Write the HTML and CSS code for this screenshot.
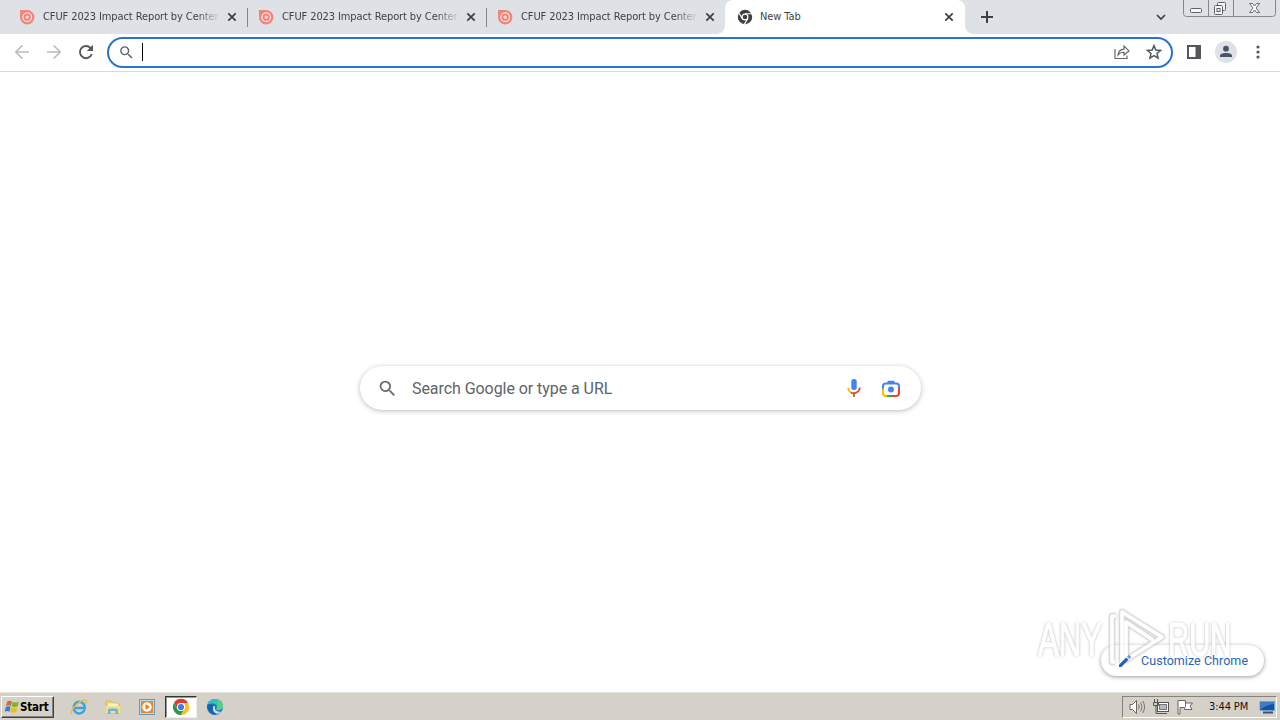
FILE: index.html
```html
<!DOCTYPE html>
<html lang="en">
<head>
<meta charset="utf-8">
<title>New Tab</title>
<link rel="stylesheet" href="styles.css">
</head>
<body>
<svg class="defs" width="0" height="0">
  <symbol id="issuu" viewBox="0 0 16 16"><path d="M1 1H8.300A7.200 7.200 0 1 1 1 8Z" fill="#f2857b"/><circle cx="8.200" cy="8.200" r="4.300" fill="none" stroke="#f9dfdd" stroke-width="1.300"/><circle cx="8.200" cy="8.200" r="1.600" fill="#f9dfdd"/></symbol>
  <symbol id="close" viewBox="0 0 10 10"><path d="M1.300 1.300 8.700 8.700M8.700 1.300 1.300 8.700" stroke="#3c4043" stroke-width="1.700"/></symbol>
  <symbol id="search" viewBox="0 0 24 24"><path d="M15.500 14h-.79l-.28-.27A6.471 6.471 0 0 0 16 9.500 6.500 6.500 0 1 0 9.500 16c1.610 0 3.090-.59 4.230-1.570l.27.28v.79l5 4.990L20.490 19l-4.990-5zm-6 0C7.010 14 5 11.990 5 9.500S7.010 5 9.500 5 14 7.010 14 9.500 11.990 14 9.500 14z"/></symbol>
</svg>
<div class="screen">
  <header class="tabstrip">
    <div class="tab"><svg class="favicon"><use href="#issuu"/></svg><span class="title fade">CFUF 2023 Impact Report by Center</span><svg class="x"><use href="#close"/></svg></div>
    <div class="tab"><svg class="favicon"><use href="#issuu"/></svg><span class="title fade">CFUF 2023 Impact Report by Center</span><svg class="x"><use href="#close"/></svg></div>
    <div class="tab last"><svg class="favicon"><use href="#issuu"/></svg><span class="title fade">CFUF 2023 Impact Report by Center</span><svg class="x"><use href="#close"/></svg></div>
    <div class="tab active">
      <svg class="favicon" viewBox="0 0 16 16"><circle cx="8" cy="8" r="7.200" fill="#3c4043"/><circle cx="8" cy="8" r="2.900" fill="none" stroke="#fff" stroke-width="1.200"/><path d="M8 4.800h7M5.200 9.600 1.800 3.800M10.800 9.600 7.300 15.400" stroke="#fff" stroke-width="1.100"/></svg>
      <span class="title">New Tab</span><svg class="x"><use href="#close"/></svg>
    </div>
    <svg class="plus" viewBox="0 0 12 12"><path d="M6 0V12M0 6H12" stroke="#3c4043" stroke-width="2"/></svg>
    <svg class="chevron" viewBox="0 0 10 7"><path d="M1 1 5 5 9 1" fill="none" stroke="#3c4043" stroke-width="1.700"/></svg>
    <svg class="caption" viewBox="0 0 93 17"><path d="M.5 0V13.500Q.5 16.500 3.500 16.500H89.500Q92.500 16.500 92.500 13.500V0M25.500 0V16M50.500 0V16" fill="none" stroke="#85898f"/><g fill="#f4f5f7" stroke="#5d6269"><rect x="7.500" y="8.500" width="11" height="4" rx="1"/><rect x="34.500" y="2.500" width="8" height="8" rx="1"/><rect x="31.500" y="5.500" width="8" height="9" rx="1"/><rect x="34" y="8.500" width="3" height="3"/><path d="M66.500 3.500H69.500L71.500 6 73.500 3.500H76.500L73.200 8 76.500 12.500H73.500L71.500 10 69.500 12.500H66.500L69.800 8Z" stroke-width=".9"/></g></svg>
  </header>
  <div class="toolbar">
    <svg class="nav" viewBox="0 0 16 16"><path d="M15 8H2M8.300 1.500 1.800 8 8.300 14.500" fill="none" stroke="#babcbe" stroke-width="1.700"/></svg>
    <svg class="nav" viewBox="0 0 16 16"><path d="M1 8H14M7.700 1.500 14.200 8 7.700 14.500" fill="none" stroke="#babcbe" stroke-width="1.700"/></svg>
    <svg class="nav" viewBox="0 0 16 16"><path d="M13.800 10A6.100 6.100 0 1 1 12.500 3.900L14 5.500" fill="none" stroke="#54585c" stroke-width="1.900"/><path d="M15 .8V7H8.800Z" fill="#54585c"/></svg>
    <div class="omnibox">
      <svg class="glass"><use href="#search"/></svg><i class="caret"></i>
      <svg class="share" viewBox="0 0 16 16"><path d="M1 5V14.500H13V11.500M4 11C4.500 7 6.500 5.300 10 5.100V2.200L15 6.900 10 11V8.300C7.200 8.200 5.500 9 4 11Z" fill="none" stroke="#5f6368" stroke-width="1.150"/></svg>
      <svg class="star" viewBox="0 0 16 16"><path d="M8 1.600 9.800 6 14.600 6.400 11 9.500 12.100 14.200 8 11.700 3.900 14.200 5 9.500 1.400 6.400 6.200 6Z" fill="none" stroke="#54585c" stroke-width="1.500"/></svg>
    </div>
    <svg class="panel" viewBox="0 0 14 14"><path d="M1 1H13V13H1Z" fill="none" stroke="#54585c" stroke-width="2"/><path d="M8.500 0H14V14H8.500Z" fill="#54585c"/></svg>
    <svg class="avatar" viewBox="0 0 22 22"><circle cx="11" cy="11" r="11" fill="#dee1e6"/><circle cx="11" cy="7.700" r="2.900" fill="#4a5265"/><path d="M5 16V14.500C5 11 17 11 17 14.500V16Z" fill="#4a5265"/></svg>
    <svg class="dots" viewBox="0 0 4 14"><g fill="#54585c"><circle cx="2" cy="2" r="1.600"/><circle cx="2" cy="7" r="1.600"/><circle cx="2" cy="12" r="1.600"/></g></svg>
  </div>
  <main class="page">
    <div class="searchbox">
      <svg class="mag"><use href="#search"/></svg><span class="hint">Search Google or type a URL</span>
      <svg class="mic" viewBox="0 0 14 20"><rect x="4.300" y="1" width="5.400" height="11" rx="2.500" fill="#4285f4"/><path d="M1.200 9.500C1.200 12 2.400 14 4.400 14.800" fill="none" stroke="#fbbc04" stroke-width="1.700"/><path d="M4 14.600C8 16.400 12.800 13.700 12.800 9.500" fill="none" stroke="#ea4335" stroke-width="1.700"/><path d="M7 15V19" stroke="#a8751e" stroke-width="1.800"/></svg>
      <svg class="lens" viewBox="0 0 18 17"><g fill="none" stroke-width="2"><path d="M1 9V6Q1 3.500 3.500 3.500H14.500Q17 3.500 17 6V9" stroke="#4285f4"/><path d="M1 8.500V13Q1 16 4 16H6" stroke="#fbbc04"/><path d="M5 16H10" stroke="#34a853"/><path d="M9 16H14Q17 16 17 13V8" stroke="#ea4335"/></g><path d="M5 3 6 .8H12L13 3Z" fill="#4285f4"/><circle cx="9" cy="9.500" r="3" fill="#4285f4"/></svg>
    </div>
    <div class="customize"></div>
    <div class="watermark">
      <span class="any">ANY</span>
      <svg class="play" viewBox="0 0 60 64"><g fill="none" stroke-linejoin="round"><path d="M9 54H6V8H10M16 55V4L56 29 20 52V14L47 32" stroke="#cfcfcf" stroke-width="5.500"/><path d="M9 54H6V8H10M16 55V4L56 29 20 52V14L47 32" stroke="#fff" stroke-width="3.600"/></g></svg>
      <span class="run">RUN</span>
    </div>
    <div class="label"><svg class="pencil" viewBox="0 0 14 14"><path d="M1 10.700V13H3.300L10.500 5.800 8.200 3.500Z" fill="#1a62c4"/><path d="M9 2.700 10.500 1.200Q11 .8 11.500 1.200L12.800 2.500Q13.200 3 12.800 3.500L11.300 5Z" fill="#6a9bdd"/></svg><span>Customize Chrome</span></div>
  </main>
  <footer class="taskbar">
    <div class="start"><svg class="flag" viewBox="0 0 17 16"><path d="M3.500 2Q6 .5 8.500 2L7.200 7Q4.700 5.500 2.200 7Z" fill="#e8602c"/><path d="M9.300 2.300Q12 4 15.800 2.300L14.500 7.300Q11 9 8 7.300Z" fill="#76b82a"/><path d="M2 7.800Q4.500 6.500 7 7.800L5.700 13Q3.200 11.500.7 13Z" fill="#2f82cf"/><path d="M7.800 8.200Q11 10 14.300 8.200L13 13.300Q9.800 15 6.500 13.300Z" fill="#f7b91d"/></svg><span>Start</span></div>
    <div class="launch">
      <svg viewBox="0 0 18 18"><path d="M14.700 11.500Q12.500 15.800 8.500 15.400 3.800 14.700 3.800 9.500 4.300 4.200 9.300 3.800 14.700 4.400 14.800 10H5" fill="none" stroke="#3ba3df" stroke-width="2.500"/><path d="M1.800 16.200C-1 12 11.500.5 16 2.300Q17 3 15.800 5.500" fill="none" stroke="#e9bd42" stroke-width="1.400"/></svg>
      <svg viewBox="0 0 18 18"><path d="M2 3H7L8.500 5H14L16 7V15H2Z" fill="#efd36f" stroke="#d1ac4a" stroke-width=".7"/><path d="M4 5.500H14V10H4Z" fill="#fff6c6"/><path d="M1.500 8H16.500V15H1.500Z" fill="#f5de8b"/><path d="M4 16V12Q4 10.500 6 10.500H12Q14 10.500 14 12V16H11.500V13H6.500V16Z" fill="#63b9dc"/></svg>
      <svg viewBox="0 0 18 18"><rect x="1.500" y="1.500" width="15" height="15" fill="#b8dcef" stroke="#5a9dc8"/><rect x="3.500" y="3.500" width="11" height="11" fill="#f58b1d" stroke="#e5862f"/><circle cx="9" cy="9" r="4.700" fill="#fff"/><path d="M7.500 6 12 9 7.500 12Z" fill="#f07c12"/></svg>
      <div class="pressed"><svg viewBox="0 0 18 18"><circle cx="9" cy="9" r="8" fill="#eee"/><path d="M2 5A8 8 0 0 1 16 5H9A4 4 0 0 0 5.600 11Z" fill="#e33b2e"/><path d="M2 5A8 8 0 0 0 9 17L12.500 11A4 4 0 0 1 5.500 11Z" fill="#279b48"/><path d="M16 5A8 8 0 0 1 9 17L12.500 11A4 4 0 0 0 11.300 5Z" fill="#fbc116"/><circle cx="9" cy="9" r="4" fill="#fff"/><circle cx="9" cy="9" r="3.100" fill="#3d7de8"/></svg></div>
      <svg viewBox="0 0 18 18"><circle cx="9" cy="9" r="8" fill="#1776bd"/><path d="M1.300 7Q3 1 9 1 16.500 1.200 17 8 16.800 12 12.500 12.200 10 12.200 10.500 10.500 12 6.500 7.500 5.500 3 5 1.300 7Z" fill="#36bfc7"/><path d="M11 1.300Q17 3 17 8 16.800 12 12.500 12.200 10 12.200 10.500 10.500 13 8 11 1.300Z" fill="#58d080"/><path d="M7 8Q5.500 13 10 15.500 13 16.500 16 13.500 13 14.500 10 12.500 8.500 11 9 8Z" fill="#cdd7dd"/><path d="M1 8Q2 16 9.500 17 5 13 7.500 8 4 4 1 8Z" fill="#1464b2"/></svg>
    </div>
    <div class="tray">
      <svg class="sound" viewBox="0 0 18 18"><path d="M2 6.500H4.500L8.500 2.500V15.500L4.500 11.500H2Z" fill="#fff" stroke="#666"/><path d="M10.500 6.500Q12 9 10.500 11.500M12.700 4.500Q15.200 9 12.700 13.500M14.800 3Q18.300 9 14.800 15" fill="none" stroke="#777"/></svg>
      <svg class="net" viewBox="0 0 18 18"><rect x="5.500" y="4.500" width="11" height="9" fill="#fff" stroke="#555"/><rect x="7.500" y="6.500" width="7" height="5" fill="#b9b9b9" stroke="#777"/><path d="M8 15.500H15M2.500 1V4M5.500 1V4M1.500 4.500H6.500V7.500H1.500ZM4 8V15.500H8" fill="none" stroke="#555"/></svg>
      <svg class="action" viewBox="0 0 18 18"><path d="M2 2.500H9.500V5H16.500L14 8 16 11.500H8.500V9.500H4V16H2Z" fill="#fff" stroke="#666"/><path d="M9.500 5V9.500" stroke="#777"/></svg>
      <span class="clock">3:44 PM</span>
      <svg class="desktop" viewBox="0 0 17 14"><path d="M1 1.500H15.500V10.500H1Z" fill="#184f9f" stroke="#64a9da"/><path d="M2 2H15V4Q7 5 2 9Z" fill="#397fc5"/><path d="M4 12.500H14" stroke="#43505c" stroke-width="2"/></svg>
    </div>
  </footer>
</div>
</body>
</html>
```
FILE: styles.css
```css
* { box-sizing: border-box; }
body { margin: 0; font-family: "DejaVu Sans Condensed", "DejaVu Sans", sans-serif; }
svg { display: block; flex: none; }
.defs { position: absolute; }
.screen { width: 1280px; height: 720px; overflow: hidden; display: flex; flex-direction: column; background: #fff; }

.tabstrip { height: 34px; flex: none; display: flex; background: #dee1e6; padding-left: 9px; }
.tab { width: 239px; height: 34px; display: flex; align-items: center; padding: 0 11px 0 10px; position: relative; }
.tab::after { content: ""; position: absolute; right: 0; top: 8px; width: 1px; height: 19px; background: #85898e; }
.tab.last { width: 238px; padding-right: 10px; }
.tab.last::after, .tab.active::after { display: none; }
.favicon { width: 16px; height: 16px; }
.title { margin-left: 8px; width: 179px; font-size: 11px; line-height: 16px; letter-spacing: -0.1px; white-space: nowrap; color: #3f4347; }
.fade { -webkit-mask-image: linear-gradient(to right, #000 154px, transparent 178px); mask-image: linear-gradient(to right, #000 154px, transparent 178px); }
.x { width: 10px; height: 10px; margin-left: auto; }
.tab.active { width: 240px; background: #fff; border-radius: 8px 8px 0 0; padding-left: 12px; }
.tab.active .title { margin-left: 7px; }
.tab.active::before { content: ""; position: absolute; left: -8px; right: -8px; bottom: 0; height: 8px; background: radial-gradient(circle at 0 0, transparent 7.500px, #fff 8px) left / 8px 8px no-repeat, radial-gradient(circle at 100% 0, transparent 7.500px, #fff 8px) right / 8px 8px no-repeat; }
.plus { width: 12px; height: 12px; margin: 11px 0 0 16px; }
.chevron { width: 10px; height: 7px; margin: 14px 0 0 auto; }
.caption { width: 93px; height: 17px; margin: 0 4px 0 17px; }

.toolbar { height: 38px; flex: none; display: flex; align-items: center; padding: 0 20px 1px 14px; border-bottom: 1px solid #d9dadd; }
.nav { width: 16px; height: 16px; margin-right: 16px; }
.nav:nth-child(3) { margin-right: 13px; }
.omnibox { width: 1066px; height: 31px; border: 2px solid #2b72ce; border-radius: 16px; display: flex; align-items: center; padding: 0 9px; }
.glass { width: 17px; height: 17px; fill: #5f6368; }
.caret { width: 1px; height: 18px; margin-left: 7px; background: #000; }
.share { width: 16px; height: 16px; margin-left: auto; }
.star { width: 16px; height: 16px; margin-left: 16px; }
.panel { width: 14px; height: 14px; margin-left: 14px; }
.avatar { width: 22px; height: 22px; margin-left: 14px; }
.dots { width: 4px; height: 14px; margin-left: auto; }

.page { flex: 1; min-height: 0; position: relative; padding-top: 294px; }
.searchbox { width: 561px; height: 44px; margin: 0 0 0 360px; display: flex; align-items: center; border-radius: 22px; box-shadow: 0 1px 5px rgba(32,33,36,.3); padding: 0 21px 0 17px; }
.mag { width: 21px; height: 21px; fill: #686b6e; }
.hint { margin: 2px 0 0 14px; font: 16px/22px Roboto, sans-serif; letter-spacing: -.06px; color: #606468; }
.mic { width: 14px; height: 20px; margin-left: auto; }
.lens { width: 18px; height: 17px; margin-left: 21px; }
.customize { position: absolute; left: 1101px; top: 573px; width: 163px; height: 31px; border-radius: 16px; background: #fff; box-shadow: 0 1px 4px rgba(0,0,0,.4); }
.label { position: absolute; left: 1101px; top: 573px; width: 163px; height: 31px; display: flex; align-items: center; padding-left: 17px; font: 12.500px/16px Roboto, sans-serif; color: #2863b5; white-space: nowrap; }
.label span { margin-left: 9px; letter-spacing: .05px; }
.pencil { width: 14px; height: 14px; }
.watermark { position: absolute; left: 1038px; top: 536px; display: flex; align-items: center; opacity: .75; }
.watermark span { font: 48px/64px "Liberation Sans", sans-serif; color: #fff; -webkit-text-stroke: 1.500px #fff; text-shadow: 0 0 2px #aaa, 0 0 3px #aaa, 0 0 4px #bbb; transform-origin: left center; }
.any { width: 68px; transform: scaleX(.65); }
.run { width: 66px; transform: scaleX(.61); }
.play { width: 60px; height: 64px; margin-right: 2px; filter: drop-shadow(0 0 1px #aaa); }

.taskbar { height: 27px; flex: none; display: flex; align-items: center; background: #d5d1c9; box-shadow: 0 -1px 0 #e6e3dc; padding: 0 3px 0 1px; }
.start { width: 53px; height: 22px; display: flex; align-items: center; padding-left: 2px; border: 1px solid; border-color: #fff #404040 #404040 #fff; box-shadow: inset -1px -1px #85827d; font: bold 11.500px/16px "DejaVu Sans Condensed", "DejaVu Sans", sans-serif; color: #000; }
.start span { letter-spacing: -.2px; }
.flag { width: 16px; height: 16px; }
.launch { display: flex; align-items: center; margin-left: 16px; }
.launch svg { width: 18px; height: 18px; margin-right: 16px; }
.pressed { width: 32px; height: 22px; margin: 0 9px 0 -7px; padding: 1px 0 0 6px; background: #fff; border: 1px solid; border-color: #333 #eee #eee #333; box-shadow: inset 1px 1px #999; }
.tray { margin-left: auto; width: 155px; height: 22px; display: flex; align-items: center; border: 1px solid; border-color: #85827d #fff #fff #85827d; padding-left: 5px; }
.sound, .net, .action { width: 18px; height: 18px; margin-right: 6px; }
.clock { margin-left: 9px; width: 42px; font-size: 11px; line-height: 16px; letter-spacing: -.1px; color: #111; white-space: nowrap; }
.desktop { width: 17px; height: 14px; margin-left: auto; }
```
